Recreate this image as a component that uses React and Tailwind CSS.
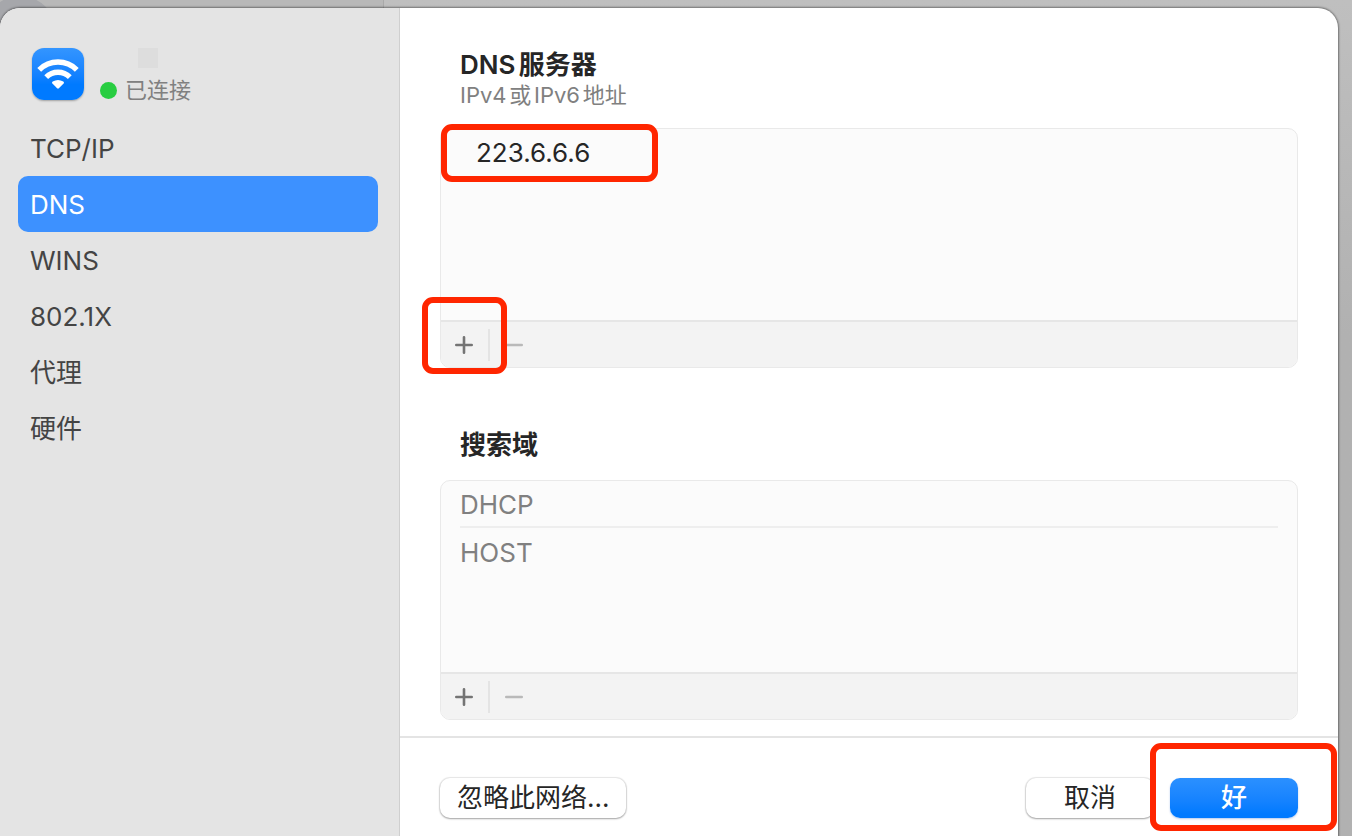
import { useState } from "react";

const sections = ["TCP/IP", "DNS", "WINS", "802.1X", "代理", "硬件"];

function Highlight({ className }) {
  return (
    <span
      aria-hidden="true"
      className={`pointer-events-none absolute z-10 rounded-[11px] border-6 border-[#ff2600] ${className}`}
    />
  );
}

function WifiBadge() {
  return (
    <span className="flex size-13 shrink-0 rounded-xl bg-linear-to-b from-[#3395ff] to-[#007aff] to-70% shadow-[0_1px_2px_rgba(0,0,0,0.3)]">
      <svg viewBox="0 0 52 52" className="size-13" fill="none" stroke="#fff" strokeWidth="5.4" aria-hidden="true">
        <path d="M7.2 21.8 A26.5 26.5 0 0 1 44.8 21.8" />
        <path d="M14.2 29.1 A16.7 16.7 0 0 1 37.8 29.1" />
        <path
          d="M20.4 35.5 Q19.4 34.4 20.7 33.5 Q26 30.3 31.3 33.5 Q32.6 34.4 31.6 35.5 L26.9 40.3 Q26 41.1 25.1 40.3 Z"
          fill="#fff"
          stroke="none"
        />
      </svg>
    </span>
  );
}

function ListPanel({ label, rows, children, highlightAdd }) {
  return (
    <div className="flex h-60 flex-col rounded-[10px] border border-[#e9e9e9] bg-[#fbfbfb]">
      <div className="relative flex-1">
        {children}
        <ul aria-label={label} className="px-[19px]">
          {rows}
        </ul>
      </div>
      <div className="relative flex h-[47px] items-center rounded-b-[9px] border-t-2 border-[#e6e6e6] bg-[#f3f3f3]">
        <button type="button" aria-label={`${label} +`} className="flex h-full w-[47px] items-center justify-center pr-px">
          <svg viewBox="0 0 18 18" className="size-[18px]" stroke="#747474" strokeWidth="2.6" strokeLinecap="round" aria-hidden="true">
            <path d="M1.3 9H16.7M9 1.3V16.7" />
          </svg>
        </button>
        <span className="h-8 w-0.5 bg-[#e4e4e4]" />
        <button type="button" disabled aria-label={`${label} −`} className="flex h-full w-12 items-center justify-center">
          <svg viewBox="0 0 18 18" className="size-[18px]" stroke="#b9b9b9" strokeWidth="2.6" strokeLinecap="round" aria-hidden="true">
            <path d="M1.3 9H16.7" />
          </svg>
        </button>
        {highlightAdd && <Highlight className="-top-[25px] -left-[19px] h-[77px] w-[85px]" />}
      </div>
    </div>
  );
}

export default function App() {
  const [active, setActive] = useState("DNS");

  return (
    <div className="relative flex min-h-screen overflow-hidden bg-linear-to-b from-[#bfbfbf] to-[#b1b1b1] to-40% pt-2 pr-3.5 font-['Inter','Noto_Sans_CJK_SC',sans-serif] text-[26px] leading-8 text-[#262626] [text-autospace:normal]">
      <span className="absolute top-0 left-0 h-2 w-96 border-r border-[#a9a9a9] bg-[#b8b8b8]" />
      <span className="absolute -top-1 -left-4 size-18 rounded-full bg-[#a6a7ab]" />
      <div className="relative flex flex-1 rounded-t-[20px] bg-white shadow-[0_0_2px_1px_rgba(0,0,0,0.4)]">
        <aside className="w-100 shrink-0 rounded-tl-[20px] border-r border-[#cfcfcf] bg-[#e4e4e4] pt-10 pr-[21px] pl-[18px]">
          <header className="flex h-[72px] items-start gap-4 pl-3.5">
            <WifiBadge />
            <div>
              <span className="ml-[38px] block size-5 bg-[#dddddd]" />
              <p className="mt-2 flex items-center gap-2 text-[22px] leading-7 text-[#808080]">
                <span className="size-[17px] rounded-full bg-[#28cd41]" />
                已连接
              </p>
            </div>
          </header>
          <nav className="flex flex-col">
            {sections.map((name) => (
              <button
                key={name}
                type="button"
                onClick={() => setActive(name)}
                aria-current={active === name ? "page" : undefined}
                className={`h-14 rounded-[10px] px-3 pt-0.5 text-left ${
                  active === name ? "bg-[#3d91ff] text-white" : "text-[#444444]"
                }`}
              >
                {name}
              </button>
            ))}
          </nav>
        </aside>

        <div className="flex min-w-0 flex-1 flex-col">
          <main className="px-10 pt-10 pb-4">
            <section>
              <h2 className="pl-5 leading-[34px] font-semibold">DNS服务器</h2>
              <p className="pl-5 text-[22px] leading-[26px] text-[#808080]">IPv4或IPv6地址</p>
              <div className="mt-5">
                <ListPanel
                  label="DNS服务器"
                  highlightAdd
                  rows={<li className="flex h-12 items-center pl-4">223.6.6.6</li>}
                >
                  <Highlight className="-top-[5px] left-0 h-[58px] w-[217px]" />
                </ListPanel>
              </div>
            </section>
            <section className="mt-15">
              <h2 className="pl-5 leading-[34px] font-semibold">搜索域</h2>
              <div className="mt-[18px] text-[#808080]">
                <ListPanel
                  label="搜索域"
                  rows={
                    <>
                      <li className="flex h-[47px] items-center border-b-2 border-[#eeeeee] pt-0.5">DHCP</li>
                      <li className="flex h-12 items-center pt-0.5">HOST</li>
                    </>
                  }
                />
              </div>
            </section>
          </main>

          <footer className="flex items-start gap-4 border-t-2 border-[#e4e4e4] px-10 pt-10 pb-4">
            <button
              type="button"
              className="mr-auto h-10 rounded-[10px] bg-white px-[17px] shadow-[0_0_1px_1px_rgba(0,0,0,0.09),0_1px_2px_rgba(0,0,0,0.3)]"
            >
              忽略此网络...
            </button>
            <button
              type="button"
              className="h-10 w-32 rounded-[10px] bg-white shadow-[0_0_1px_1px_rgba(0,0,0,0.09),0_1px_2px_rgba(0,0,0,0.3)]"
            >
              取消
            </button>
            <div className="relative">
              <button
                type="button"
                className="h-10 w-32 rounded-[10px] bg-linear-to-b from-[#2b90ff] to-[#007aff] to-90% font-medium text-white shadow-[0_1px_2px_rgba(0,80,200,0.3)]"
              >
                好
              </button>
              <Highlight className="-top-[35px] -left-5 h-[88px] w-[187px]" />
            </div>
          </footer>
        </div>
      </div>
    </div>
  );
}
